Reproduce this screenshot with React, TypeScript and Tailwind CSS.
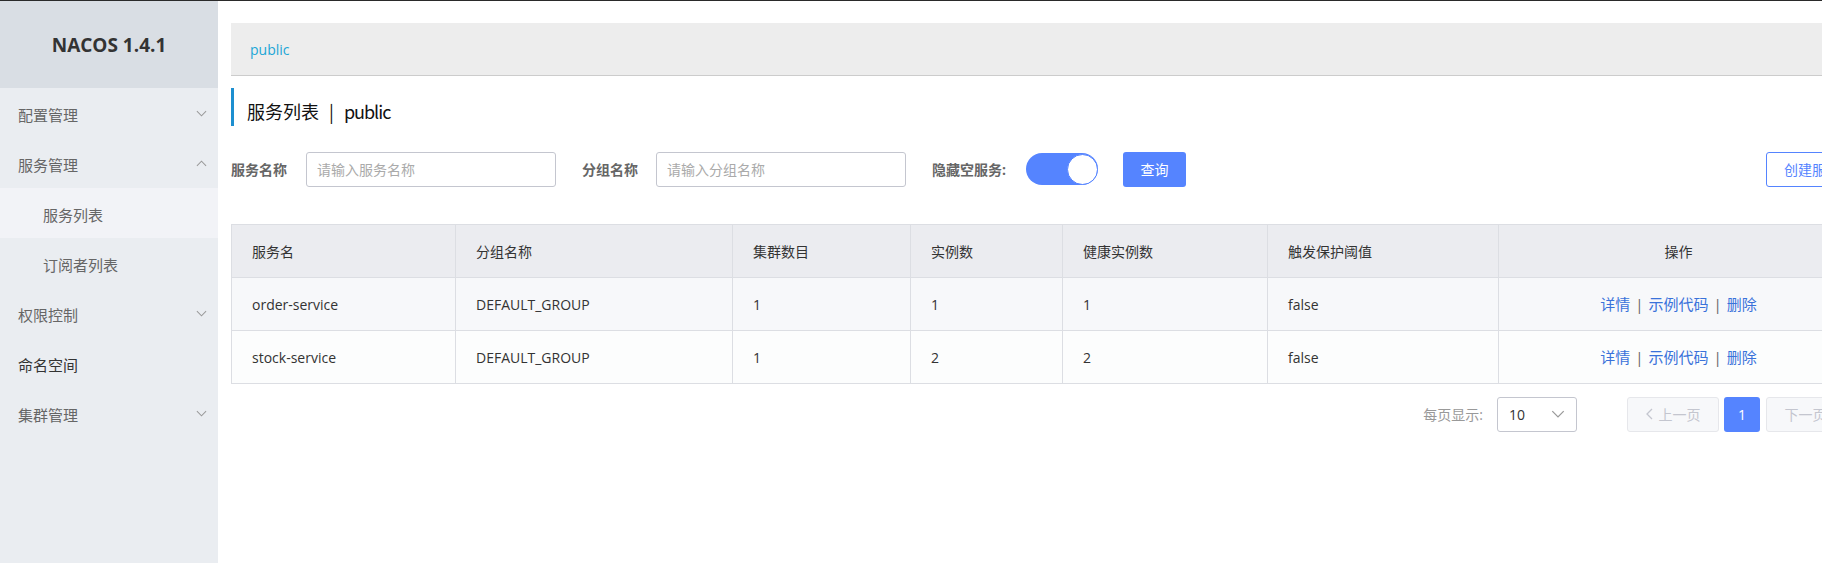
import React from 'react'

const ChevronDown = ({ className }: { className?: string }) => (
    <svg viewBox="0 0 12 7" fill="none" stroke="currentColor" strokeWidth="1.1" className={className}>
        <path d="M1 1l5 5 5-5" />
    </svg>
)

const ChevronUp = ({ className }: { className?: string }) => (
    <svg viewBox="0 0 12 7" fill="none" stroke="currentColor" strokeWidth="1.1" className={className}>
        <path d="M1 6l5-5 5 5" />
    </svg>
)

const MenuItem = ({ label, open, noArrow, sub, active, dark }: { label: string; open?: boolean; noArrow?: boolean; sub?: boolean; active?: boolean; dark?: boolean }) => (
    <div className={`h-[50px] flex items-center justify-between pr-[11px] ${sub ? 'pl-[43px]' : 'pl-[18px]'} ${active ? 'bg-[#f2f3f7]' : ''}`}>
        <span className={`text-[15px] pt-[5px] ${dark ? 'text-[#333]' : 'text-[#666]'}`}>{label}</span>
        {!sub && !noArrow && (open ? <ChevronUp className="w-[11px] h-[7px] text-[#999]" /> : <ChevronDown className="w-[11px] h-[7px] text-[#999]" />)}
    </div>
)

const Sidebar = () => (
    <aside className="w-[218px] shrink-0 bg-[#eaedf1] flex flex-col">
        <div className="h-[87px] bg-[#d9dee4] flex items-center justify-center">
            <span className="text-[19px] font-bold text-[#333] pt-[2px]">NACOS 1.4.1</span>
        </div>
        <MenuItem label="配置管理" />
        <MenuItem label="服务管理" open />
        <MenuItem label="服务列表" sub active />
        <MenuItem label="订阅者列表" sub />
        <MenuItem label="权限控制" />
        <MenuItem label="命名空间" noArrow dark />
        <MenuItem label="集群管理" />
    </aside>
)

const columns = [
    { title: '服务名', w: 224 },
    { title: '分组名称', w: 277 },
    { title: '集群数目', w: 178 },
    { title: '实例数', w: 152 },
    { title: '健康实例数', w: 205 },
    { title: '触发保护阈值', w: 231 },
    { title: '操作', w: 360 },
]

const rows = [
    { name: 'order-service', group: 'DEFAULT_GROUP', clusters: 1, count: 1, healthy: 1, threshold: 'false' },
    { name: 'stock-service', group: 'DEFAULT_GROUP', clusters: 1, count: 2, healthy: 2, threshold: 'false' },
]

const Actions = () => (
    <span className="text-[#3a72da] text-[15px]">
        详情<span className="text-[#666] mx-[5px]">|</span>示例代码<span className="text-[#666] mx-[5px]">|</span>删除
    </span>
)

const ServiceTable = () => (
    <table className="table-fixed border-collapse w-[1627px] text-[14px] text-[#333] border border-[#dcdee3]">
        <colgroup>
            {columns.map((c) => (
                <col key={c.title} style={{ width: c.w }} />
            ))}
        </colgroup>
        <thead>
            <tr className="h-[53px] bg-[#ebecf0]">
                {columns.map((c, i) => (
                    <th key={c.title} className={`font-normal border border-[#dcdee3] px-[20px] ${i === 6 ? 'text-center' : 'text-left'}`}>
                        {c.title}
                    </th>
                ))}
            </tr>
        </thead>
        <tbody>
            {rows.map((r, idx) => (
                <tr key={r.name} className={`h-[53px] ${idx === 0 ? 'bg-[#f7f8fa]' : 'bg-[#fcfdfd]'}`}>
                    <td className="border border-[#dcdee3] px-[20px]">{r.name}</td>
                    <td className="border border-[#dcdee3] px-[20px]">{r.group}</td>
                    <td className="border border-[#dcdee3] px-[20px]">{r.clusters}</td>
                    <td className="border border-[#dcdee3] px-[20px]">{r.count}</td>
                    <td className="border border-[#dcdee3] px-[20px]">{r.healthy}</td>
                    <td className="border border-[#dcdee3] px-[20px]">{r.threshold}</td>
                    <td className="border border-[#dcdee3] px-[20px] text-center"><Actions /></td>
                </tr>
            ))}
        </tbody>
    </table>
)

const App = () => {
    return (
        <div className="w-[1822px] h-[563px] overflow-hidden bg-white font-['Open_Sans','Noto_Sans_CJK_SC',sans-serif] flex flex-col">
            <div className="h-px bg-[#2a2a2a] shrink-0" />
            <div className="flex flex-1 min-h-0">
                <Sidebar />
                <main className="pl-[13px] pt-[22px] w-[1640px] shrink-0">
                    {/* breadcrumb */}
                    <div className="h-[53px] bg-[#ededed] border-b border-[#cccccc] flex items-center pl-[19px]">
                        <span className="text-[14px] text-[#20a6d6]">public</span>
                    </div>

                    {/* title */}
                    <div className="mt-[12px] h-[38px] border-l-[3px] border-[#1d8fd0] flex items-center pl-[13px] pt-[9px] text-[18px] text-[#111] font-['Noto_Sans_CJK_SC',sans-serif]">
                        服务列表<span className="mx-[10px]">|</span><span className="tracking-[-1px]">public</span>
                    </div>

                    {/* filters */}
                    <div className="mt-[25px] flex items-center h-[36px]">
                        <span className="text-[14px] font-bold text-[#666] w-[75px]">服务名称</span>
                        <input className="w-[250px] h-[35px] border border-[#c4c6cf] rounded-[3px] px-[10px] text-[14px] placeholder:text-[#aaa] outline-none" placeholder="请输入服务名称" />
                        <span className="text-[14px] font-bold text-[#666] ml-[26px] w-[74px]">分组名称</span>
                        <input className="w-[250px] h-[35px] border border-[#c4c6cf] rounded-[3px] px-[10px] text-[14px] placeholder:text-[#aaa] outline-none" placeholder="请输入分组名称" />
                        <span className="text-[14px] font-bold text-[#666] ml-[26px]">隐藏空服务:</span>
                        <div className="ml-[20px] w-[72px] h-[32px] rounded-full bg-[#5584ff] flex items-center justify-end">
                            <div className="w-[31px] h-[31px] rounded-full bg-white border border-[#5584ff]" />
                        </div>
                        <button className="ml-[25px] w-[63px] h-[35px] rounded-[3px] bg-[#5584ff] text-white text-[14px]">查询</button>
                        <button className="ml-auto w-[92px] h-[35px] rounded-[3px] border border-[#5584ff] bg-white text-[#5584ff] text-[14px]">创建服务</button>
                    </div>

                    {/* table */}
                    <div className="mt-[37px]">
                        <ServiceTable />
                    </div>

                    {/* pagination */}
                    <div className="mt-[12px] w-[1627px] flex items-center justify-end h-[36px]">
                        <span className="text-[14px] text-[#999]">每页显示:</span>
                        <div className="ml-[14px] w-[80px] h-[35px] border border-[#c4c6cf] rounded-[3px] flex items-center justify-between pl-[11px] pr-[11px]">
                            <span className="text-[14px] text-[#333]">10</span>
                            <ChevronDown className="w-[14px] h-[8px] text-[#999]" />
                        </div>
                        <button className="ml-[50px] w-[92px] h-[35px] rounded-[3px] border border-[#e6e7eb] bg-[#f7f8fa] text-[#c4c6cf] text-[14px] flex items-center justify-center gap-[6px]">
                            <svg viewBox="0 0 7 12" fill="none" stroke="currentColor" strokeWidth="1.3" className="w-[7px] h-[12px]">
                                <path d="M6 1L1 6l5 5" />
                            </svg>
                            上一页
                        </button>
                        <button className="ml-[5px] w-[36px] h-[35px] rounded-[3px] bg-[#5584ff] text-white text-[14px]">1</button>
                        <button className="ml-[6px] w-[92px] h-[35px] rounded-[3px] border border-[#e6e7eb] bg-[#f7f8fa] text-[#c4c6cf] text-[14px] flex items-center justify-center gap-[6px]">
                            下一页
                            <svg viewBox="0 0 7 12" fill="none" stroke="currentColor" strokeWidth="1.3" className="w-[7px] h-[12px]">
                                <path d="M1 1l5 5-5 5" />
                            </svg>
                        </button>
                    </div>
                </main>
            </div>
        </div>
    )
}

export default App
